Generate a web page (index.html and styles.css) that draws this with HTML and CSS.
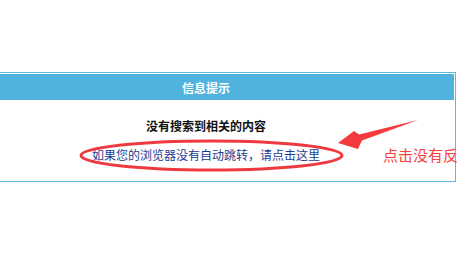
FILE: index.html
```html
<!DOCTYPE html>
<html lang="zh-CN">
<head>
<meta charset="utf-8">
<title>信息提示</title>
<link rel="stylesheet" href="styles.css">
</head>
<body>
<div class="box">
  <div class="box-head">信息提示</div>
  <div class="box-body">
    <p class="msg">没有搜索到相关的内容</p>
    <a class="jump" href="#">如果您的浏览器没有自动跳转，请点击这里</a>
  </div>
</div>
<svg class="marks" width="460" height="274" viewBox="0 0 460 274" aria-hidden="true">
  <ellipse cx="211.5" cy="155.5" rx="130.5" ry="14.5" fill="none" stroke="#ec3a40" stroke-width="3"/>
  <polygon points="338,143 354,131 359,134.5 418,120 362,140.5 358,149" fill="#f23c3c"/>
</svg>
<div class="note">点击没有反</div>
</body>
</html>
```
FILE: styles.css
```css
html, body {
  margin: 0;
  padding: 0;
  overflow: hidden;
  background: #ffffff;
  width: 460px;
  height: 274px;
}
body {
  font-family: "Noto Sans CJK SC", "Noto Sans", sans-serif;
  font-size: 12px;
  position: relative;
}
.box {
  box-sizing: border-box;
  width: 500px;
  margin: 72px 0 0 -44px;
  border: 1px solid #5cb9e1;
  padding: 1px;
  height: 110px;
  display: flex;
  flex-direction: column;
}
.box-head {
  height: 26px;
  background: #4fb3dd;
  color: #ffffff;
  font-weight: bold;
  font-size: 12px;
  display: flex;
  align-items: center;
  justify-content: center;
}
.box-body {
  flex: 1;
  display: flex;
  flex-direction: column;
  align-items: center;
  padding-top: 17px;
}
.msg {
  margin: 0;
  font-weight: bold;
  color: #111111;
  line-height: 18px;
}
.jump {
  margin-top: 11px;
  color: #1c3b8f;
  text-decoration: none;
  line-height: 18px;
}
.marks {
  position: absolute;
  left: 0;
  top: 0;
  pointer-events: none;
}
.note {
  position: absolute;
  left: 383px;
  top: 145px;
  font-size: 15px;
  color: #f2413f;
  white-space: nowrap;
  line-height: 20px;
}
```
